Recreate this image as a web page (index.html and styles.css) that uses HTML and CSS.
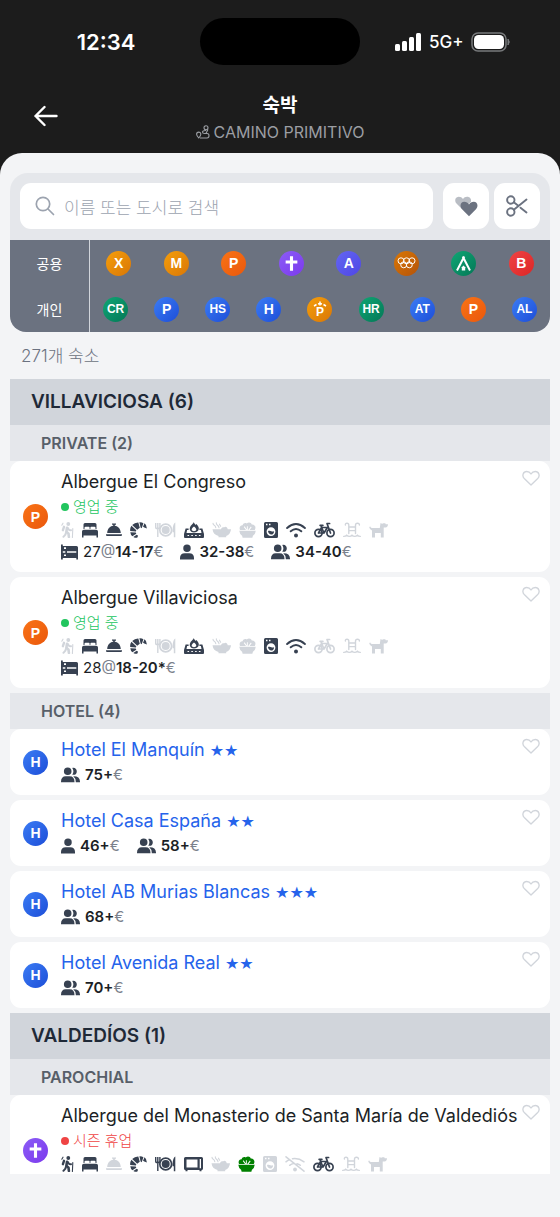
FILE: index.html
```html
<!DOCTYPE html>
<html lang="ko">
<head>
<meta charset="utf-8">
<meta name="viewport" content="width=device-width, initial-scale=1">
<title>숙박</title>
<link rel="stylesheet" href="styles.css">
</head>
<body>
<svg class="sprite" aria-hidden="true">
  <symbol id="hiker" viewBox="0 0 13 16"><g fill="none" stroke="currentColor" stroke-linecap="round" stroke-linejoin="round"><path stroke-width="2.600" d="M6 5.800 5.400 9.600 7.500 11.600 7.900 14.800"/><path stroke-width="2" d="M5 10.600 4.400 12.600 2.400 14.800M6.600 5.800 8.200 8 10 8.200"/><path stroke-width="2.400" d="M3 4.800 1.900 8.200"/><path stroke-width="1.100" d="M11.800 6.600 11.400 15.400M.8 3.200 2 1.200"/></g><circle cx="7.300" cy="2" r="1.900" fill="currentColor"/></symbol>
  <symbol id="bed" viewBox="0 0 16 16"><path fill="currentColor" d="M1.500 7V2.400Q1.500.9 3 .9h10q1.500 0 1.500 1.500V7h-1V5.800q0-1-1-1H9.200q-.8 0-.8.9V7h-.8V5.700q0-.9-.8-.9H3.500q-1 0-1 1V7zM0 15.400V9.500Q0 7.700 1.800 7.700h12.400Q16 7.700 16 9.500v5.900h-1.500v-1.900h-13v1.900zM.8 10.800h14.400v.7H.8z"/></symbol>
  <symbol id="bell" viewBox="0 0 16 16"><path fill="currentColor" d="M7.200 3.800V2.700H6V1.500h4v1.200H8.800v1.100c3.500.4 5.800 3.200 6 7.100H1.200c.2-3.900 2.500-6.700 6-7.100zM0 12.200h16v.7q0 1.100-1.100 1.100H1.100Q0 14 0 12.900z"/></symbol>
  <symbol id="croissant" viewBox="0 0 17 16"><path fill="currentColor" d="M2.200 2.900Q4.800.3 8.300.4l1.500 5.300-2.600 2zM9.400.3q2.700-.1 4 .9l-1.700 5-1.100-.6zM14.500 1.300q2.300 1.500 2.400 5.200l-2.600-.9-1.300-.8zM1.400 3.700 6.300 8.300 5.900 9.500.2 9.100Q-.2 5.900 1.400 3.700zM.3 10.200l5.500.3.500 1.200-3.900 2.500Q.6 12.900.3 10.200zM6.700 12.700l1.400 1.100-.9 2Q5 15.900 3.300 14.900z"/></symbol>
  <symbol id="plate" viewBox="0 0 21 16"><g fill="none" stroke="currentColor"><circle cx="10.700" cy="8" r="5.900" stroke-width="1.700"/><path stroke-width="1.400" d="M.7 1v4.200q0 1.500 2.100 1.500t2.100-1.500V1M2.800 1v14"/></g><circle cx="10.700" cy="8" r="4" fill="currentColor"/><path fill="currentColor" d="M20.300.6v14.700h-1.500v-5h-1.300c0-5 .8-8.600 2.800-9.700z"/></symbol>
  <symbol id="stove" viewBox="0 0 20 16"><path fill="currentColor" fill-rule="evenodd" d="M9.700 0c.5 1.500 1.500 2 1.800 3l.9-.9c4.800 4.600 1.800 8.300-2.400 8.300-4.400 0-5.900-4.300-2-7.900 1-.9 1.500-1.500 1.700-2.500zM10 4.600C6 7.500 8 9.300 10 9.300s3.900-1.800 0-4.700zM1.600 6.500h3v1.600H3.100L2.500 11h15l-.6-2.900h-1.500V6.500h3L20 12v3q0 1-1 1H1q-1 0-1-1v-3zM3.500 12.900v1.200h1.600v-1.200zm3.800 0v1.200h1.600v-1.200zm3.800 0v1.200h1.600v-1.200zm3.800 0v1.200h1.600v-1.200z"/></symbol>
  <symbol id="microwave" viewBox="0 0 19 16"><path fill="currentColor" fill-rule="evenodd" d="M1.500 1h16Q19 1 19 2.500v10q0 1.500-1.500 1.500v1.200h-2V14h-12v1.200h-2V14Q0 14 0 12.500v-10Q0 1 1.500 1zM2.500 3.500v8h11v-8zM15.700 3v9.300H17V3z"/></symbol>
  <symbol id="bowl" viewBox="0 0 19 16"><path fill="currentColor" d="M.5 7.200H9C9.600 5.400 11 5 12.200 5.300 13.500 4 15.500 4.900 15.700 7.200H19q-.4 4.800-4.800 6.900V15.200H6.500v-1.100Q1.200 12.500.5 7.200z"/><path fill="none" stroke="currentColor" stroke-width="1.100" stroke-linecap="round" d="M3.800 5.800Q3.600 4 2.300 3.300T1 1.200M7 5.800Q6.900 4.200 5.500 3.200T4.300.9M8.600 4.200 7.500 2.200"/></symbol>
  <symbol id="salad" viewBox="0 0 17 16"><path fill="currentColor" d="M.3 8.800h16.400q-.2 3.400-3 5.100v1q0 .8-.8.800H4.100q-.8 0-.8-.8v-1Q.5 12.200.3 8.800zM1 7.900C-.2 5.200 1.500 3.200 3.600 3.300 4.100 1 6.500.6 7.700 1.500 9.700-.4 12.300.5 12.800 2.600c2.500-.4 4.800 2.200 3 5.300H10.600l2-2.700-.7-.6-2.700 3.300H8.800V4.200h-.9v3.200L5.500 4.300l-.7.6 2.200 3z"/></symbol>
  <symbol id="washer" viewBox="0 0 14 16"><path fill="currentColor" fill-rule="evenodd" d="M1.500 0h11Q14 0 14 1.500v13q0 1.500-1.500 1.500h-11Q0 16 0 14.500v-13Q0 0 1.500 0zM2 1.700v1.500h1.500V1.700zm3 0v1.500h1.500V1.700zm2 3.500a4.400 4.400 0 1 0 0 8.800 4.400 4.400 0 0 0 0-8.800zM4 9.100c2-.9 2.800 1.200 6.100.1-.1 4.700-5.700 4.400-6.100-.1z"/></symbol>
  <symbol id="wifi" viewBox="0 0 20 16"><path fill="none" stroke="currentColor" stroke-width="1.900" stroke-linecap="round" d="M1.100 6Q10-1.800 18.900 6M4.700 9.300q5.300-4.500 10.600 0"/><circle cx="10" cy="13.500" r="2" fill="currentColor"/></symbol>
  <symbol id="wifi-off" viewBox="0 0 20 16"><path fill="none" stroke="currentColor" stroke-width="1.500" stroke-linecap="round" d="M1 5.800Q2.600 4.500 4.200 3.900M7.500 2.700q6-1 11.500 3.100M4.700 9.300Q6.500 8 8.600 7.600M12 7.700q2 .4 3.300 1.600M1 .8l18 14.400"/><circle cx="10" cy="13.500" r="1.900" fill="currentColor"/></symbol>
  <symbol id="bike" viewBox="0 0 21 16"><g fill="none" stroke="currentColor" stroke-width="1.700" stroke-linecap="round" stroke-linejoin="round"><circle cx="4.500" cy="11" r="3.600"/><circle cx="16.500" cy="11" r="3.600"/><path d="M4.500 11 7.600 5.500h5.800L10 11H4.500M7.600 5.500 10 11M6.100 3.300h2.800M7.600 5.500l-.5-2M16.500 11 13 1.500h2.600"/></g></symbol>
  <symbol id="pool" viewBox="0 0 18 16"><path fill="none" stroke="currentColor" stroke-width="1.400" stroke-linecap="round" d="M5.800 11.500V3.200Q5.800 1.200 4 1.200T2.400 3M12.500 11.500V3.200q0-2 2-2T16.400 3M5.800 5h6.700M5.800 8.600h6.700M.7 14.400q2 0 3-1.200 1.200 1.200 2.700 1.200T9 13.200q1.200 1.200 2.700 1.200t2.700-1.200q1 1.200 2.900 1.200"/></symbol>
  <symbol id="dog" viewBox="0 0 19 16"><path fill="currentColor" d="M.2 5 1.300 4.600q.3 1.400 1.500 1.400h8L11.500 1q1.800 1.200 2.800.2h2l.4 1H19q0 3-2.600 3.200h-1.700V15.400h-2.900V11H6v4.400H3V8.500Q.5 7.600.2 5z"/></symbol>
  <symbol id="bunk" viewBox="0 0 17 16"><path fill="currentColor" fill-rule="evenodd" d="M0 .5h1.800V2h13.700Q17 2 17 3.500v12h-1.700v-1.600H1.800v1.600H0zM1.800 7.300v1.500h2.500V7.300zm4.200 0v1.500h9.300V7.300zM3 3.200v1.700h2V3.200zm0 7.300v1.500h2v-1.500z"/></symbol>
  <symbol id="person" viewBox="0 0 14 16"><path fill="currentColor" d="M7 .5a3.700 3.700 0 1 0 0 7.500 3.700 3.700 0 0 0 0-7.500zM0 15.500V14q0-4.800 4.800-4.800h4.400Q14 9.200 14 14v1.500z"/></symbol>
  <symbol id="people" viewBox="0 0 19 16"><path fill="currentColor" d="M6.700.5a3.800 3.800 0 1 0 0 7.600 3.800 3.800 0 0 0 0-7.600zM0 15.300q-.1-6 4.800-6h3.800q5 0 4.900 6zM11.300.9q2.200 3.400 0 6.800c6 1.500 6-8 0-6.800zM12.300 9.300q6.900-.2 6.700 6h-4.200q.1-3.900-2.500-6z"/></symbol>
  <symbol id="heart" viewBox="0 0 20 18"><path fill="none" stroke="currentColor" stroke-width="1.500" stroke-linejoin="round" d="M10 16.300 2.800 9.400C-.8 5.700 1.600 1.200 5.200 1.200 7.500 1.200 9 2.300 10 4c1-1.700 2.500-2.800 4.800-2.800 3.600 0 6 4.500 2.400 8.200z"/></symbol>
  <symbol id="cross" viewBox="0 0 16 20"><path fill="currentColor" d="M6.100 1h3.800v5.200h5.300v3.700H9.900V19H6.100V9.900H.8V6.200h5.300z"/></symbol>
</svg>

<div class="app">
  <div class="status-bar">
    <span class="clock">12:34</span>
    <span class="island"></span>
    <span class="signal">
      <svg width="28" height="20" viewBox="0 0 28 20" fill="#fff"><rect x="1" y="12" width="5" height="7" rx="1.500"/><rect x="8" y="9" width="5" height="10" rx="1.500"/><rect x="15" y="5" width="5" height="14" rx="1.500"/><rect x="22" y="1" width="5" height="18" rx="1.500"/></svg>
      <span class="network">5G+</span>
      <svg width="40" height="20" viewBox="0 0 40 20"><rect x="1" y="1" width="34" height="18" rx="6" fill="none" stroke="#77797b" stroke-width="1.500"/><rect x="3" y="3" width="30" height="14" rx="4.500" fill="#fff"/><path d="M37 7q2.500 3 0 6z" fill="#77797b" stroke="#77797b"/></svg>
    </span>
  </div>

  <header class="top">
    <button class="back" aria-label="뒤로"><svg width="24" height="22" viewBox="0 0 24 22" fill="none" stroke="#fff" stroke-width="2.400" stroke-linecap="round" stroke-linejoin="round"><path d="M22.500 11H1.500M10.500 2l-9 9 9 9"/></svg></button>
    <div class="titles">
      <h1>숙박</h1>
      <p class="route"><svg width="14" height="14" viewBox="0 0 14 14" fill="none" stroke="currentColor" stroke-width="1.100"><circle cx="10" cy="2.800" r="2"/><path d="M10 5.500Q6.500 5.500 6.500 7t2 1.500h2.700Q13 8.500 13 10.700T11 13H4M2.800 13Q.6 10.500.6 9.200a2.100 2.100 0 0 1 4.200 0Q4.800 10.500 2.800 13zM10 8.300 12 4.500"/></svg>CAMINO PRIMITIVO</p>
    </div>
  </header>

  <main class="sheet">
    <form class="search" role="search">
      <label class="search-box">
        <svg width="20" height="20" viewBox="0 0 20 20" fill="none" stroke="#9ca3af" stroke-width="1.700" stroke-linecap="round"><circle cx="8" cy="8" r="6.700"/><path d="m13 13 5.500 5.500"/></svg>
        <input type="search" placeholder="이름 또는 도시로 검색" aria-label="이름 또는 도시로 검색">
      </label>
      <button type="button" class="tool" aria-label="즐겨찾기"><svg width="24" height="22" viewBox="0 0 24 22"><path fill="#b9bdc4" d="M8 14 2.500 8.500C0 5.500 1.500 1.700 4.800 1.700 6.700 1.700 7.800 2.500 9 4 10 2.500 11.300 1.700 13 1.700c3 0 4.500 2.300 4 5z"/><path fill="#6b7280" d="M15 21.200 8.300 14.500C4.900 11 6.900 6.800 10.200 6.800c2.200 0 3.700.9 4.800 2.600 1.100-1.700 2.600-2.600 4.800-2.600 3.300 0 5.300 4.200 1.900 7.700z"/></svg></button>
      <button type="button" class="tool" aria-label="필터 지우기"><svg width="22" height="22" viewBox="0 0 22 22" fill="none" stroke="#6b7280" stroke-width="1.900" stroke-linecap="round"><circle cx="4.800" cy="5" r="3.700"/><circle cx="4.800" cy="17" r="3.700"/><path d="M7.800 7.200 12 10.500M14.500 12.700 20.500 17.500M7.800 14.800 20.500 4.500"/></svg></button>
    </form>

    <section class="legend">
      <div class="legend-row">
        <span class="legend-label">공용</span>
        <div class="legend-items">
          <button class="badge amber">X</button><button class="badge amber">M</button><button class="badge orange">P</button>
          <button class="badge purple" aria-label="Parochial"><svg class="cross"><use href="#cross"/></svg></button>
          <button class="badge indigo">A</button>
          <button class="badge brown" aria-label="Association"><svg width="19" height="14" viewBox="0 0 19 14" fill="none" stroke="#fff" stroke-width="1"><circle cx="4" cy="4.800" r="3"/><circle cx="9.500" cy="4.800" r="3"/><circle cx="15" cy="4.800" r="3"/><circle cx="6.700" cy="8.800" r="3"/><circle cx="12.300" cy="8.800" r="3"/></svg></button>
          <button class="badge green" aria-label="Camping"><svg width="17" height="17" viewBox="0 0 17 17"><path d="M2 15.500 8.500 3 15 15.500M8.500 3 7.700 1.500M8.500 3l.8-1.500" fill="none" stroke="#fff" stroke-width="2"/><path d="M6.800 15.500v-3.300l1.700-1.700 1.700 1.700v3.300z" fill="#fff"/></svg></button>
          <button class="badge red">B</button>
        </div>
      </div>
      <div class="legend-row">
        <span class="legend-label">개인</span>
        <div class="legend-items">
          <button class="badge green two">CR</button><button class="badge blue">P</button><button class="badge blue two">HS</button><button class="badge blue">H</button>
          <button class="badge amber pension"><svg width="14" height="6" viewBox="0 0 14 6"><path d="M1 5 3.500 3.500M5 3l2-.5L9 3M10.500 3.500 13 5M7 .5v4" fill="none" stroke="#fff" stroke-width="1.500"/></svg>P</button>
          <button class="badge green two">HR</button><button class="badge blue two">AT</button><button class="badge orange">P</button><button class="badge blue two">AL</button>
        </div>
      </div>
    </section>

    <p class="count">271개 숙소</p>

    <div class="list">
      <h2 class="town">VILLAVICIOSA (6)</h2>
      <h3 class="kind">PRIVATE (2)</h3>
      <article class="card">
        <span class="badge orange">P</span>
        <div class="info">
          <h4 class="name">Albergue El Congreso</h4>
          <p class="state open"><i class="dot"></i>영업 중</p>
          <div class="amenities">
            <svg class="w13 off"><use href="#hiker"/></svg><svg class="w16"><use href="#bed"/></svg><svg class="w16"><use href="#bell"/></svg><svg class="w17"><use href="#croissant"/></svg><svg class="w21 off"><use href="#plate"/></svg><svg class="w20"><use href="#stove"/></svg><svg class="w19 off"><use href="#bowl"/></svg><svg class="w17 off"><use href="#salad"/></svg><svg class="w14"><use href="#washer"/></svg><svg class="w20"><use href="#wifi"/></svg><svg class="w21"><use href="#bike"/></svg><svg class="w18 off"><use href="#pool"/></svg><svg class="w19 off"><use href="#dog"/></svg>
          </div>
          <div class="prices">
            <span class="price"><svg class="w17"><use href="#bunk"/></svg><span>27<i>@</i><b>14-17</b><i>€</i></span></span>
            <span class="price"><svg class="w14"><use href="#person"/></svg><span><b>32-38</b><i>€</i></span></span>
            <span class="price"><svg class="w19"><use href="#people"/></svg><span><b>34-40</b><i>€</i></span></span>
          </div>
        </div>
        <button class="fav" aria-label="즐겨찾기 추가"><svg><use href="#heart"/></svg></button>
      </article>
      <article class="card">
        <span class="badge orange">P</span>
        <div class="info">
          <h4 class="name">Albergue Villaviciosa</h4>
          <p class="state open"><i class="dot"></i>영업 중</p>
          <div class="amenities">
            <svg class="w13 off"><use href="#hiker"/></svg><svg class="w16"><use href="#bed"/></svg><svg class="w16"><use href="#bell"/></svg><svg class="w17"><use href="#croissant"/></svg><svg class="w21 off"><use href="#plate"/></svg><svg class="w20"><use href="#stove"/></svg><svg class="w19 off"><use href="#bowl"/></svg><svg class="w17 off"><use href="#salad"/></svg><svg class="w14"><use href="#washer"/></svg><svg class="w20"><use href="#wifi"/></svg><svg class="w21 off"><use href="#bike"/></svg><svg class="w18 off"><use href="#pool"/></svg><svg class="w19 off"><use href="#dog"/></svg>
          </div>
          <div class="prices">
            <span class="price"><svg class="w17"><use href="#bunk"/></svg><span>28<i>@</i><b>18-20*</b><i>€</i></span></span>
          </div>
        </div>
        <button class="fav" aria-label="즐겨찾기 추가"><svg><use href="#heart"/></svg></button>
      </article>

      <h3 class="kind">HOTEL (4)</h3>
      <article class="card">
        <span class="badge blue">H</span>
        <div class="info">
          <h4 class="name"><a href="#">Hotel El Manquín</a> <span class="stars">★★</span></h4>
          <div class="prices"><span class="price"><svg class="w19"><use href="#people"/></svg><span><b>75+</b><i>€</i></span></span></div>
        </div>
        <button class="fav" aria-label="즐겨찾기 추가"><svg><use href="#heart"/></svg></button>
      </article>
      <article class="card">
        <span class="badge blue">H</span>
        <div class="info">
          <h4 class="name"><a href="#">Hotel Casa España</a> <span class="stars">★★</span></h4>
          <div class="prices"><span class="price"><svg class="w14"><use href="#person"/></svg><span><b>46+</b><i>€</i></span></span><span class="price"><svg class="w19"><use href="#people"/></svg><span><b>58+</b><i>€</i></span></span></div>
        </div>
        <button class="fav" aria-label="즐겨찾기 추가"><svg><use href="#heart"/></svg></button>
      </article>
      <article class="card">
        <span class="badge blue">H</span>
        <div class="info">
          <h4 class="name"><a href="#">Hotel AB Murias Blancas</a> <span class="stars">★★★</span></h4>
          <div class="prices"><span class="price"><svg class="w19"><use href="#people"/></svg><span><b>68+</b><i>€</i></span></span></div>
        </div>
        <button class="fav" aria-label="즐겨찾기 추가"><svg><use href="#heart"/></svg></button>
      </article>
      <article class="card">
        <span class="badge blue">H</span>
        <div class="info">
          <h4 class="name"><a href="#">Hotel Avenida Real</a> <span class="stars">★★</span></h4>
          <div class="prices"><span class="price"><svg class="w19"><use href="#people"/></svg><span><b>70+</b><i>€</i></span></span></div>
        </div>
        <button class="fav" aria-label="즐겨찾기 추가"><svg><use href="#heart"/></svg></button>
      </article>

      <h2 class="town">VALDEDÍOS (1)</h2>
      <h3 class="kind">PAROCHIAL</h3>
      <article class="card">
        <span class="badge purple"><svg class="cross"><use href="#cross"/></svg></span>
        <div class="info">
          <h4 class="name">Albergue del Monasterio de Santa María de Valdediós</h4>
          <p class="state closed"><i class="dot"></i>시즌 휴업</p>
          <div class="amenities">
            <svg class="w13"><use href="#hiker"/></svg><svg class="w16"><use href="#bed"/></svg><svg class="w16 off"><use href="#bell"/></svg><svg class="w17"><use href="#croissant"/></svg><svg class="w21"><use href="#plate"/></svg><svg class="w19"><use href="#microwave"/></svg><svg class="w19 off"><use href="#bowl"/></svg><svg class="w17 veg"><use href="#salad"/></svg><svg class="w14 off"><use href="#washer"/></svg><svg class="w20 off"><use href="#wifi-off"/></svg><svg class="w21"><use href="#bike"/></svg><svg class="w18 off"><use href="#pool"/></svg><svg class="w19 off"><use href="#dog"/></svg>
          </div>
          <div class="prices"></div>
        </div>
        <button class="fav" aria-label="즐겨찾기 추가"><svg><use href="#heart"/></svg></button>
      </article>
    </div>
  </main>
</div>
</body>
</html>
```
FILE: styles.css
```css
* { box-sizing: border-box; margin: 0; padding: 0; }

body {
  background: #1c1c1c;
  color: #1c1f26;
  font-family: Inter, "Noto Sans CJK KR", sans-serif;
}

button { border: 0; background: none; font: inherit; color: inherit; cursor: pointer; }
svg { display: block; flex: none; }
i { font-style: normal; }
.sprite { display: none; }

.app { display: flex; flex-direction: column; height: 100vh; }

/* Status bar */
.status-bar {
  display: grid;
  grid-template-columns: 1fr 160px 1fr;
  align-items: center;
  height: 83px;
  color: #fff;
}
.clock { justify-self: center; padding-left: 12px; font-size: 22px; font-weight: 600; }
.island { height: 47px; border-radius: 24px; background: #000; }
.signal { display: flex; align-items: center; gap: 7px; padding-left: 34px; }
.network { font-size: 17px; font-weight: 500; }

/* Header */
.top {
  display: grid;
  grid-template-columns: 64px 1fr 64px;
  align-items: center;
  height: 70px;
  color: #fff;
}
.back { padding: 0 0 4px 34px; }
.titles { text-align: center; }
.titles h1 { font-size: 19px; line-height: 28px; font-weight: 700; }
.route {
  display: flex;
  align-items: center;
  justify-content: center;
  gap: 4px;
  color: #9b9ea3;
  font-size: 16px;
  line-height: 24px;
}

/* Sheet */
.sheet {
  display: flex;
  flex: 1;
  flex-direction: column;
  min-height: 0;
  padding: 20px 10px 43px;
  border-radius: 22px 22px 0 0;
  background: #f3f4f6;
}

.search {
  display: flex;
  gap: 5px;
  padding: 10px 10px 11px;
  border-radius: 18px 18px 0 0;
  background: #e5e7eb;
}
.search-box {
  display: flex;
  flex: 1;
  align-items: center;
  gap: 9px;
  height: 46px;
  margin-right: 5px;
  padding: 0 15px;
  border-radius: 11px;
  background: #fff;
}
.search-box input {
  flex: 1;
  min-width: 0;
  padding-top: 3px;
  border: 0;
  outline: 0;
  background: none;
  font-family: inherit;
  font-size: 17px;
}
.search-box input::placeholder { color: #9ca3af; font-weight: 300; }
.tool {
  display: grid;
  place-items: center;
  width: 46px;
  height: 46px;
  border-radius: 11px;
  background: #fff;
}

/* Type legend */
.legend {
  overflow: hidden;
  border-radius: 0 0 16px 16px;
  background: #6b7280;
}
.legend-row { display: grid; grid-template-columns: 80px 1fr; height: 46px; }
.legend-label {
  display: grid;
  place-items: center;
  border-right: 1px solid #d1d5db;
  color: #fff;
  font-size: 14px;
}
.legend-items { display: grid; grid-auto-flow: column; grid-auto-columns: 1fr; place-items: center; }

.badge {
  display: flex;
  flex: none;
  flex-direction: column;
  align-items: center;
  justify-content: center;
  width: 25px;
  height: 25px;
  border-radius: 50%;
  color: #fff;
  font: 700 14px/16px "Liberation Sans", sans-serif;
}
.badge.two { font-size: 12px; }
.badge.pension { font-size: 12px; line-height: 11px; }
.amber { background: linear-gradient(135deg, #f59e0b, #d97706); }
.orange { background: linear-gradient(135deg, #f97316, #ea580c); }
.purple { background: linear-gradient(135deg, #8b5cf6, #7c3aed); }
.indigo { background: linear-gradient(135deg, #6366f1, #4f46e5); }
.brown { background: linear-gradient(135deg, #d97706, #b45309); }
.green { background: linear-gradient(135deg, #10a674, #047857); }
.red { background: linear-gradient(135deg, #ef4444, #dc2626); }
.blue { background: linear-gradient(135deg, #3b7cf4, #1d4ed8); }
.cross { width: 13px; height: 17px; }

.count {
  padding: 12px 11px 11px;
  color: #6b7280;
  font-size: 17px;
  line-height: 24px;
  font-weight: 300;
}

/* Lodging list */
.list { flex: 1; min-height: 0; overflow: hidden; }
.town {
  padding: 0 21px;
  background: #d1d5db;
  color: #1f2937;
  font-size: 19px;
  line-height: 46px;
  font-weight: 600;
}
.kind {
  padding: 0 31px;
  background: #e5e7eb;
  color: #585f69;
  font-size: 16px;
  line-height: 36px;
  font-weight: 600;
}
.card {
  display: flex;
  align-items: center;
  gap: 13px;
  margin-bottom: 5px;
  padding: 9px 10px 9px 13px;
  border-radius: 11px;
  background: #fff;
}
.info { flex: 1; min-width: 0; }
.name { font-size: 18px; line-height: 24px; font-weight: 400; white-space: nowrap; }
.name a { color: #2563eb; text-decoration: none; }
.stars { color: #2563eb; font: 400 16px/20px "DejaVu Sans", sans-serif; }
.state {
  display: flex;
  align-items: center;
  gap: 4px;
  margin-top: 2px;
  font-size: 15px;
  line-height: 22px;
  font-weight: 300;
}
.dot { width: 8px; height: 8px; border-radius: 50%; background: currentColor; }
.open { color: #22c55e; }
.closed { color: #ef4444; }

.amenities { display: flex; gap: 8px; height: 20px; margin-top: 2px; padding: 2px 0; color: #374151; }
.amenities svg, .price svg { height: 16px; }
.amenities .off { color: #d1d5db; }
.amenities .veg { color: #008000; }
.w13 { width: 13px; }
.w14 { width: 14px; }
.w16 { width: 16px; }
.w17 { width: 17px; }
.w18 { width: 18px; }
.w19 { width: 19px; }
.w20 { width: 20px; }
.w21 { width: 21px; }

.prices { display: flex; gap: 17px; min-height: 23px; font-size: 15px; line-height: 23px; }
.name + .prices { margin-top: 1px; }
.price { display: flex; align-items: center; gap: 5px; }
.price svg { color: #374151; }
.price b { font-weight: 600; }
.price i { color: #7b818c; }

.fav { align-self: flex-start; margin-left: -13px; color: #d1d5db; }
.fav svg { width: 18px; height: 17px; }
```
